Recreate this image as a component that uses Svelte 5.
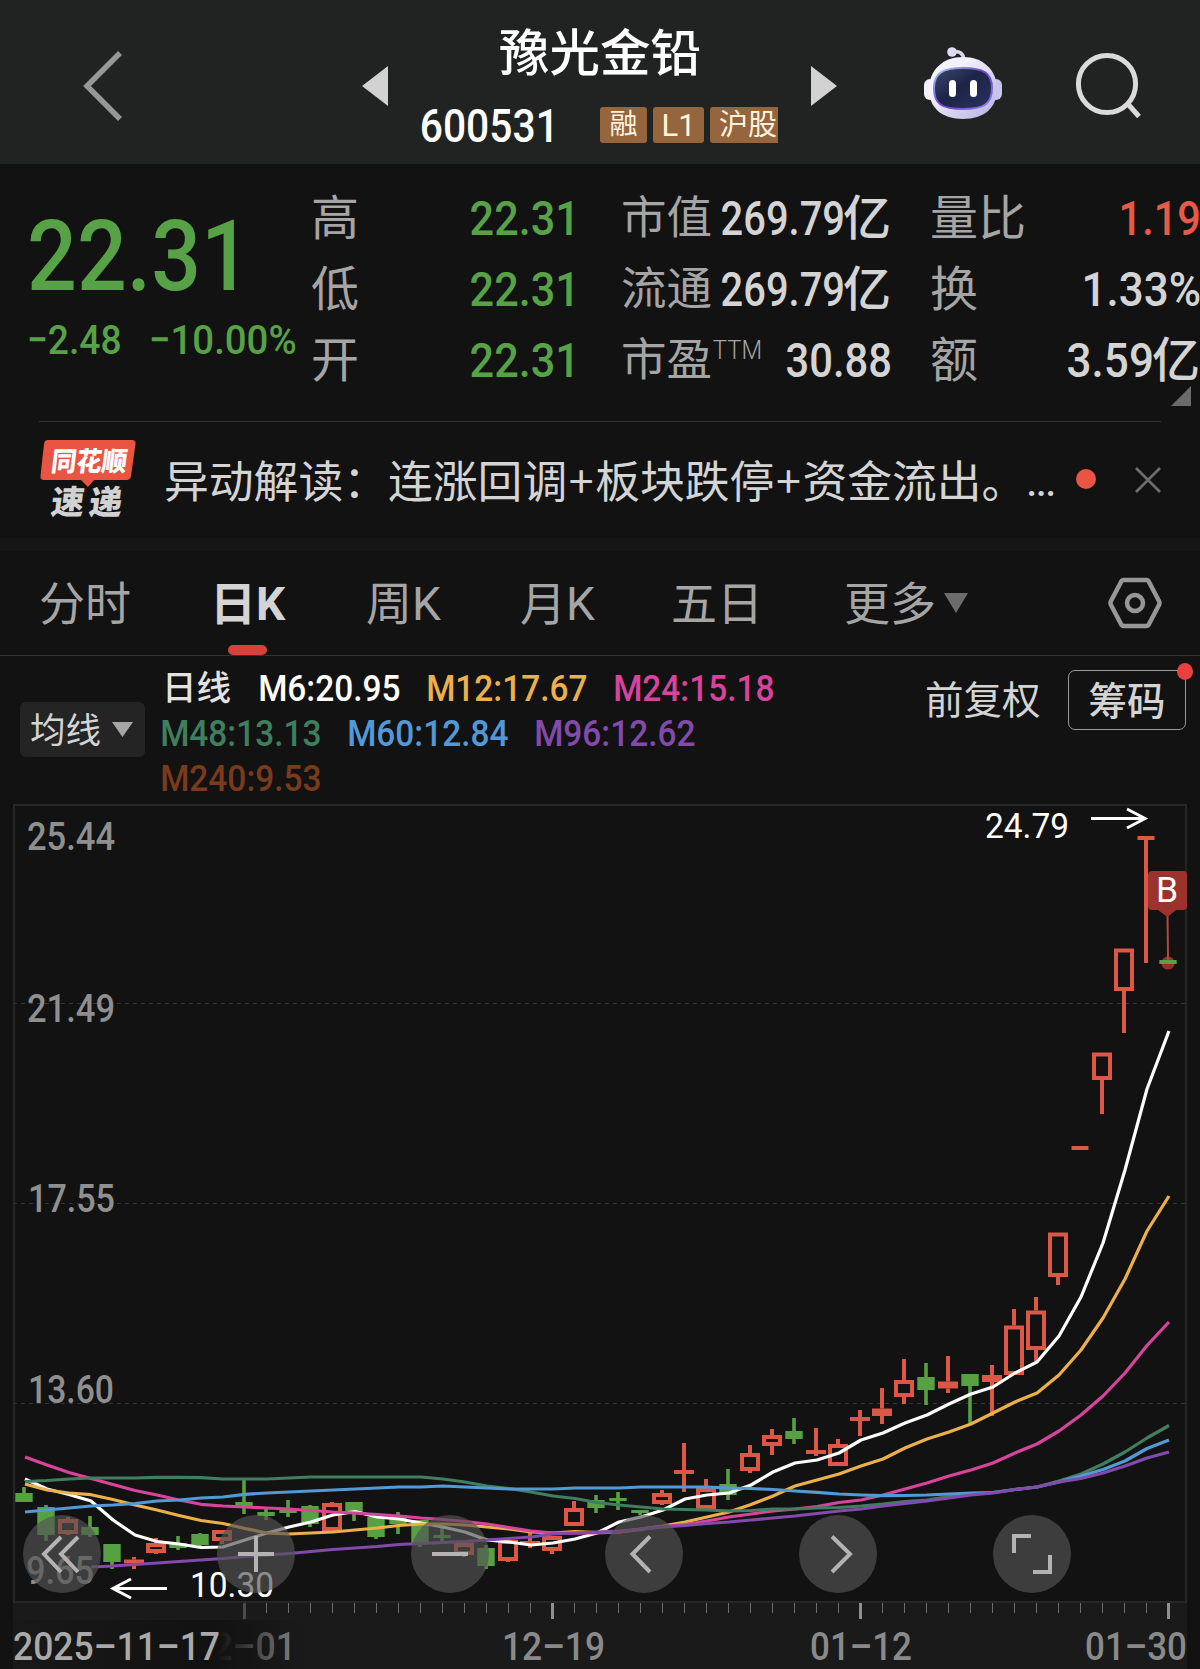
<script>
  const quotes = [
    [
      { label: '高', value: '22.31', w: 106, tone: 'down' },
      { label: '低', value: '22.31', w: 106, tone: 'down' },
      { label: '开', value: '22.31', w: 106, tone: 'down' }
    ],
    [
      { label: '市值', value: '269.79', w: 120, unit: '亿' },
      { label: '流通', value: '269.79', w: 120, unit: '亿' },
      { label: '市盈', sup: 'TTM', value: '30.88', w: 102 }
    ],
    [
      { label: '量比', value: '1.19', w: 78, tone: 'up' },
      { label: '换', value: '1.33%', w: 115 },
      { label: '额', value: '3.59', w: 83, unit: '亿' }
    ]
  ];

  const averages = [
    [
      { text: 'M6:20.95', w: 139, color: '#ffffff' },
      { text: 'M12:17.67', w: 158, color: '#ebb04c' },
      { text: 'M24:15.18', w: 158, color: '#d8449c' }
    ],
    [
      { text: 'M48:13.13', w: 158, color: '#3f7f5e' },
      { text: 'M60:12.84', w: 158, color: '#5299d6' },
      { text: 'M96:12.62', w: 158, color: '#824bab' }
    ],
    [{ text: 'M240:9.53', w: 158, color: '#7a3a1c' }]
  ];

  const STEP = 22;
  const cx = (i) => 24 + i * STEP;

  // [direction, high, body top, body bottom, low] in chart units
  const candles = [
    ['g', 1487, 1493, 1502, 1502], ['g', 1505, 1507, 1535, 1541], ['r', 1517, 1519, 1534, 1535],
    ['g', 1516, 1527, 1535, 1537], ['g', 1544, 1544, 1562, 1569], ['r', 1557, 1559.5, 1563.5, 1569],
    ['r', 1538, 1543, 1553, 1554], ['g', 1536, 1543, 1548, 1550], ['g', 1533, 1534, 1545, 1546],
    ['r', 1530, 1530, 1541, 1544], ['g', 1480, 1502, 1508, 1514], ['g', 1509, 1512, 1516, 1520],
    ['g', 1500, 1510, 1513, 1517], ['g', 1505, 1506, 1524, 1527], ['r', 1502, 1503, 1531, 1531],
    ['g', 1502, 1502, 1513, 1521], ['g', 1517, 1517, 1537, 1539], ['g', 1512, 1515, 1524, 1534],
    ['g', 1520, 1520, 1544, 1547], ['g', 1528, 1535, 1538, 1541], ['r', 1543, 1543, 1555, 1557],
    ['g', 1545, 1548, 1566, 1569], ['r', 1540, 1540, 1561, 1562], ['r', 1533, 1541, 1544, 1548],
    ['r', 1536, 1536, 1551, 1554], ['r', 1501, 1508, 1526, 1526], ['g', 1495, 1500, 1508, 1513],
    ['g', 1492, 1498, 1501, 1510], ['g', 1510, 1510, 1513, 1515], ['r', 1490, 1493, 1504, 1505],
    ['r', 1443, 1470, 1474, 1492], ['r', 1479, 1488, 1509, 1509], ['g', 1469, 1484, 1495, 1500],
    ['r', 1445, 1453, 1471, 1473], ['r', 1429, 1435, 1446, 1455], ['g', 1418, 1431, 1439, 1444],
    ['r', 1428, 1450, 1454, 1456], ['r', 1439, 1444, 1466, 1466], ['r', 1410, 1417, 1421, 1436],
    ['r', 1388, 1408.5, 1416, 1424], ['r', 1359, 1380, 1397, 1404], ['g', 1363, 1377, 1390, 1405],
    ['r', 1356, 1381.5, 1388.5, 1393], ['g', 1374, 1374, 1386, 1423], ['r', 1365, 1375, 1382, 1416],
    ['r', 1309, 1325.5, 1375, 1375], ['r', 1297, 1310.5, 1350, 1361], ['r', 1232.5, 1232.5, 1277, 1285],
    ['r', 1146, 1146, 1150, 1150, 17], ['r', 1052.5, 1052.5, 1080, 1114], ['r', 948.5, 948.5, 991, 1033],
    ['r', 836, 836, 840, 963, 17], ['g', 960, 960, 964, 964]
  ];

  const lines = [
    { color: '#ffffff', from: 0, ys: [1479, 1489, 1494.5, 1501, 1520, 1535, 1541.5, 1544, 1547.5, 1547, 1540, 1533, 1527, 1522, 1515, 1511.5, 1517, 1519, 1523, 1527, 1532, 1540, 1542, 1545, 1543, 1539, 1533, 1522, 1517, 1510, 1499, 1495, 1493, 1485, 1472, 1463, 1460, 1453, 1440, 1433, 1423, 1415, 1404, 1394, 1387, 1373, 1362, 1336, 1297, 1243, 1170, 1089, 1031] },
    { color: '#ebb04c', from: 0, ys: [1484, 1490, 1493, 1494.7, 1499.5, 1505, 1510, 1515.5, 1520.5, 1523.5, 1528.5, 1533, 1534, 1533, 1532, 1530, 1528, 1525.5, 1524, 1524, 1525, 1527, 1529, 1532, 1533, 1531.5, 1532.5, 1532, 1529, 1526, 1522, 1517, 1512, 1504.5, 1496, 1486, 1480, 1474, 1466, 1459, 1448, 1439, 1432, 1424, 1413, 1402, 1393, 1375, 1350, 1318, 1279, 1231, 1196] },
    { color: '#d8449c', from: 0, ys: [1457, 1465, 1472.5, 1478.5, 1484.5, 1490.5, 1495, 1500, 1504.3, 1506, 1507, 1508, 1509, 1510.5, 1512, 1513, 1514.5, 1516, 1518, 1519.5, 1521.5, 1524, 1527.5, 1531, 1533, 1533, 1533, 1532, 1529.5, 1526.5, 1524.5, 1521, 1517, 1514, 1511, 1509, 1506.5, 1502.5, 1500, 1495, 1489, 1483, 1476, 1470, 1463, 1453, 1444, 1431, 1415, 1396, 1373, 1345.5, 1322] },
    { color: '#417d5f', from: 0, ys: [1481.5, 1480.5, 1479, 1478, 1478, 1478, 1477.3, 1477.3, 1477.7, 1479, 1479, 1479, 1478, 1477, 1477, 1477, 1477, 1477, 1477, 1479, 1482, 1486, 1488.5, 1492, 1496, 1498.5, 1502.5, 1505, 1507, 1509, 1509.5, 1510, 1511, 1510.5, 1509, 1509, 1508, 1507.5, 1506, 1504, 1501.5, 1500, 1496.5, 1494, 1492.5, 1489.5, 1487, 1481, 1474, 1464, 1452, 1438, 1425.5] },
    { color: '#5299d6', from: 0, ys: [1512, 1510, 1508, 1506, 1505, 1503.5, 1501, 1500, 1498, 1497, 1494.3, 1493, 1492, 1491, 1490, 1489, 1488, 1487, 1487, 1486, 1487, 1488, 1489, 1489, 1489, 1488, 1488, 1488, 1487, 1487, 1487, 1487, 1488, 1488.5, 1489.5, 1491, 1492.3, 1494, 1495, 1495.7, 1495.5, 1495, 1494, 1493, 1492.5, 1489.5, 1487, 1482, 1476, 1469.5, 1461, 1448.5, 1440] },
    { color: '#824bab', from: 3, ys: [1567, 1566, 1564.5, 1563, 1561.5, 1560, 1558.5, 1556.5, 1555, 1553.5, 1551.5, 1549.5, 1548, 1546.5, 1544.5, 1543.5, 1542.5, 1541.5, 1540, 1538.5, 1537, 1534, 1533, 1532, 1531, 1529, 1527, 1525.5, 1523.5, 1522, 1520, 1518, 1516, 1513.5, 1511, 1509, 1506, 1503.3, 1501, 1498, 1495, 1493, 1489.5, 1487, 1482, 1478.5, 1473, 1466, 1458, 1452] }
  ].map((l) => ({
    color: l.color,
    points: l.ys.map((y, k) => `${cx(k + l.from) + 1},${y}`).join(' ')
  }));

  const grid = [1003.5, 1203.5, 1403.5];
  const prices = [
    ['25.44', 850, 29, 84], ['21.49', 1022, 29, 84], ['17.55', 1212, 30, 83], ['13.60', 1403, 30, 82], ['9.65', 1584, 28, 64]
  ];
  const ticks = Array.from({ length: 43 }, (_, k) => k + 10);
  const isMajor = (i) => (i - 10) % 14 === 0;
  const dates = [
    ['12–01', 194, 100], ['12–19', 504, 99], ['01–12', 812, 98], ['01–30', 1087, 98]
  ];
  const controls = ['first', 'plus', 'minus', 'prev', 'next', 'expand'];
</script>

{#snippet num(text, w, size, cls = '')}
  <svg class="num {cls}" width={w} height={size * 0.711}>
    <text x={-0.05 * size} y={size * 0.711} font-size={size} textLength={w + 0.09 * size} lengthAdjust="spacingAndGlyphs">{text}</text>
  </svg>
{/snippet}

<main>
  <header>
    <svg class="back" width="44" height="76" viewBox="0 0 44 76">
      <path d="M40 5 L7 38 L40 71" fill="none" stroke="#979797" stroke-width="5.5" />
    </svg>
    <svg class="prev" width="26" height="40"><path d="M0 20 L26 0 V40 Z" fill="#d2d2d2" /></svg>
    <div class="title">
      <h1>豫光金铅</h1>
      <div class="code">
        {@render num('600531', 135, 46, 'medium')}
        <div class="tags"><span>融</span><span class="l1">L1</span><span class="clip">沪股</span></div>
      </div>
    </div>
    <svg class="next" width="26" height="40"><path d="M26 20 L0 0 V40 Z" fill="#d2d2d2" /></svg>
    <svg class="robot" width="80" height="76" viewBox="0 0 80 76">
      <defs>
        <linearGradient id="shell" x1="0" y1="0" x2="1" y2="1">
          <stop offset="0.3" stop-color="#f4f2fb" /><stop offset="1" stop-color="#b4aedf" />
        </linearGradient>
        <linearGradient id="rim" x1="0" y1="0" x2="1" y2="1">
          <stop offset="0" stop-color="#9fd0ee" /><stop offset="0.5" stop-color="#6a3fc4" /><stop offset="1" stop-color="#8d84f0" />
        </linearGradient>
        <linearGradient id="visor" x1="0" y1="0" x2="1" y2="1">
          <stop offset="0" stop-color="#3d4870" /><stop offset="0.45" stop-color="#1d2448" /><stop offset="1" stop-color="#2b3160" />
        </linearGradient>
      </defs>
      <path d="M30 6 Q40 4 41 14" fill="none" stroke="#d9d7ee" stroke-width="3.6" />
      <circle cx="29" cy="6" r="4.8" fill="#dedcf2" />
      <rect x="1" y="33" width="14" height="21" rx="6" fill="#f2f1fb" />
      <rect x="65" y="33" width="14" height="21" rx="6" fill="#c9c5ea" />
      <path d="M40 11 C60 11 74 24 74 43 C74 62 61 73 40 73 C19 73 6 62 6 43 C6 24 20 11 40 11 Z" fill="url(#shell)" />
      <path d="M40 22 C60 22 69 27 69 42 C69 58 61 63 40 63 C19 63 11 58 11 42 C11 27 20 22 40 22 Z" fill="url(#visor)" stroke="url(#rim)" stroke-width="2" />
      <rect x="26" y="34" width="7" height="17" rx="3.5" fill="#fff" />
      <rect x="47" y="34" width="7" height="17" rx="3.5" fill="#fff" />
    </svg>
    <svg class="search" width="68" height="68" viewBox="0 0 68 68">
      <circle cx="32" cy="32" r="28.6" fill="none" stroke="#dadada" stroke-width="5" />
      <path d="M52 51 L64 64.500" stroke="#dadada" stroke-width="5" />
    </svg>
  </header>

  <section class="quote">
    <div class="last">
      {@render num('22.31', 215, 98.500, 'down medium')}
      <div class="change">
        {@render num('−2.48', 91, 41.500, 'down medium')}
        {@render num('−10.00%', 144, 41.500, 'down medium')}
      </div>
    </div>
    {#each quotes as group}
      <dl>
        {#each group as q}
          <div class="row">
            <dt>{q.label}{#if q.sup}{@render num(q.sup, 47, 25.500, 'sup')}{/if}</dt>
            <dd>{@render num(q.value, q.w, 49, (q.tone ?? '') + ' medium')}{#if q.unit}<span>{q.unit}</span>{/if}</dd>
          </div>
        {/each}
      </dl>
    {/each}
    <svg class="corner" width="20" height="20"><path d="M20 0 V20 H0 Z" fill="#6b6b6b" /></svg>
  </section>

  <section class="news">
    <svg class="logo" width="98" height="80" viewBox="0 0 98 80">
      <path d="M9 0 H93 Q97 0 96.500 4 L92 36 Q91.500 40 87 40 H55 L49 47 L42 40 H5 Q1 40 1.500 36 L5 4 Q5.500 0 9 0 Z" fill="#ea5442" />
      <g transform="skewX(-7)">
        <text x="15" y="31" font-size="27" textLength="76" lengthAdjust="spacingAndGlyphs" fill="#fff">同花顺</text>
        <text x="20" y="74" font-size="33" textLength="33" lengthAdjust="spacingAndGlyphs" fill="#d2d2d2">速</text>
        <text x="58" y="74" font-size="33" textLength="33" lengthAdjust="spacingAndGlyphs" fill="#d2d2d2">递</text>
      </g>
    </svg>
    <p>异动解读：连涨回调<i>+</i>板块跌停<i>+</i>资金流出。<b>...</b></p>
    <span class="dot"></span>
    <svg class="close" width="26" height="26"><path d="M1 1 L25 25 M25 1 L1 25" stroke="#6e6e6e" stroke-width="2.6" /></svg>
  </section>

  <nav>
    <span class="t1">分时</span>
    <span class="t2 active">日K</span>
    <span class="t3">周K</span>
    <span class="t4">月K</span>
    <span class="t5">五日</span>
    <span class="t6">更多</span>
    <svg class="caret" width="24" height="20"><path d="M0 0 H24 L12 20 Z" fill="#6c6c6c" /></svg>
    <svg class="gear" width="54" height="52" viewBox="0 0 54 52">
      <path d="M15.500 3 H38.500 Q40 3 41 5 L51 24 Q52 26 51 28 L41 47 Q40 49 38.500 49 H15.500 Q14 49 13 47 L3 28 Q2 26 3 24 L13 5 Q14 3 15.500 3 Z" fill="none" stroke="#979797" stroke-width="4.500" />
      <circle cx="27" cy="26" r="8" fill="none" stroke="#979797" stroke-width="4.500" />
    </svg>
  </nav>

  <section class="legend">
    <button class="ma">均线<svg width="21" height="15"><path d="M0 0 H21 L10.500 15 Z" fill="#a6a6a6" /></svg></button>
    <div class="lines">
      {#each averages as row, r}
        <div class="avg">
          {#if r === 0}<span class="day">日线</span>{/if}
          {#each row as a}
            <span style:color={a.color}>{@render num(a.text, a.w, 37.500, 'medium')}</span>
          {/each}
        </div>
      {/each}
    </div>
    <span class="adjust">前复权</span>
    <button class="chips">筹码<i></i></button>
  </section>

  <section class="chart">
    <svg width="1200" height="866" viewBox="0 803 1200 866">
      <defs>
        <linearGradient id="fade" x1="0" x2="1" y1="0" y2="0">
          <stop offset="0" stop-color="#121212" stop-opacity="0.2" />
          <stop offset="0.6" stop-color="#121212" />
          <stop offset="0.7" stop-color="#121212" />
          <stop offset="1" stop-color="#121212" stop-opacity="0" />
        </linearGradient>
      </defs>
      <rect x="13" y="1602" width="1174" height="67" fill="#1a1a1a" />
      <path d="M13 805 H1186 V1602 H14 V804" fill="none" stroke="#262626" stroke-width="2" />
      {#each grid as y}
        <path d="M13 {y} H1186" stroke="#353535" stroke-dasharray="4 4" />
      {/each}
      <g class="price">
        {#each prices as [text, y, x, w]}
          <text x={x - 2} {y} font-size="38" textLength={w + 4} lengthAdjust="spacingAndGlyphs">{text}</text>
        {/each}
      </g>

      <circle cx="1168" cy="963" r="6.600" fill="#93302a" />
      {#each candles as [dir, hi, top, bot, lo, width], i}
        {#if dir === 'g'}
          <path d="M{cx(i)} {hi} V{lo}" stroke="#57a143" stroke-width="3.600" />
          <rect x={cx(i) - 8.7} y={top} width="17.400" height={bot - top} fill="#57a143" />
        {:else}
          <path d="M{cx(i)} {hi} V{top} M{cx(i)} {bot} V{lo}" stroke="#dc5745" stroke-width="4" />
          {#if bot - top > 8}
            <rect x={cx(i) - 8} y={top + 2} width="16" height={bot - top - 4} fill="none" stroke="#dc5745" stroke-width="4" />
          {:else}
            <rect x={cx(i) - (width ?? 20) / 2} y={top} width={width ?? 20} height={bot - top} fill="#dc5745" />
          {/if}
        {/if}
      {/each}
      {#each lines as l}
        <polyline points={l.points} fill="none" stroke={l.color} stroke-width="3.200" stroke-linejoin="round" />
      {/each}

      <g class="mark">
        <text x="190" y="1597" font-size="35" textLength="84" lengthAdjust="spacingAndGlyphs">10.30</text>
        <text x="985" y="838" font-size="35" textLength="84" lengthAdjust="spacingAndGlyphs">24.79</text>
        <path d="M167 1588.500 H113 M131 1579 L113 1588.500 L131 1598" />
        <path d="M1091 818.500 H1145 M1127 809 L1145 818.500 L1127 828" />
      </g>
      <path d="M1167.500 915 L1168 960" stroke="#b14940" stroke-width="2" />
      <path d="M1152 871 H1183 Q1187 871 1187 875 V906 Q1187 910 1183 910 H1176 L1167.500 917 L1158 910 H1152 Q1148 910 1148 906 V875 Q1148 871 1152 871 Z" fill="#9c322c" />
      <text class="flag" x="1156" y="902" font-size="35.500">B</text>

      {#each ticks as i}
        {#if isMajor(i)}
          <rect x={cx(i) - 1} y="1603" width="3" height="16" fill={i === 10 ? '#4c4c4c' : '#8f8f8f'} />
        {:else}
          <rect x={cx(i)} y="1603" width="1" height="10" fill="#6a6a6a" />
        {/if}
      {/each}
      <g class="date">
        {#each dates as [text, x, w]}
          <text x={x - 2} y="1660" font-size="38.500" textLength={w + 4} lengthAdjust="spacingAndGlyphs">{text}</text>
        {/each}
        <rect x="13" y="1620" width="292" height="49" fill="url(#fade)" />
        <text class="start" x="13" y="1660" font-size="38.500" textLength="207" lengthAdjust="spacingAndGlyphs">2025–11–17</text>
      </g>
    </svg>

    <div class="controls">
      {#each controls as c}
        <button aria-label={c}>
          <svg width="78" height="78" viewBox="0 0 78 78">
            {#if c === 'first'}<path d="M38 22 L21 39 L38 57 M55 22 L38 39 L55 57" />
            {:else if c === 'plus'}<path d="M21 39 H57 M39 21 V57" />
            {:else if c === 'minus'}<path d="M21 39 H57" />
            {:else if c === 'prev'}<path d="M45 21.500 L27.500 39 L45 57" />
            {:else if c === 'next'}<path d="M33 21.500 L51 39 L33 57" />
            {:else}<path d="M38 21 H21 V38 M40 57 H57 V40" />{/if}
          </svg>
        </button>
      {/each}
    </div>
  </section>
</main>

<style>
  :global(body) { margin: 0; background: #121212; }
  main {
    width: 1200px;
    height: 1669px;
    overflow: hidden;
    background: #121212;
    color: #d4d4d4;
    font-family: Roboto, 'Noto Sans CJK SC', sans-serif;
  }
  svg { display: block; flex: none; }
  button { font: inherit; color: inherit; padding: 0; border: 0; box-sizing: border-box; }
  .num { overflow: visible; }
  .num text { fill: currentColor; }
  .medium { font-weight: 500; }
  .down { color: #57a146; }
  .up { color: #e65a46; }

  header {
    display: flex;
    box-sizing: border-box;
    height: 164px;
    padding-left: 80px;
    background: #202322;
  }
  .back { margin-top: 48px; }
  .prev { margin: 66px 0 0 238px; }
  .title { width: 356px; margin: 0 33px 0 34px; }
  h1 {
    margin: 24px 0 0 77px;
    font-size: 50.5px;
    line-height: 60px;
    font-weight: 500;
    color: #fff;
  }
  .code {
    display: flex;
    align-items: center;
    justify-content: space-between;
    height: 36px;
    margin-top: 23px;
    color: #fff;
  }
  .tags { display: flex; gap: 6px; width: 178px; overflow: hidden; }
  .tags span {
    flex: none;
    width: 47px;
    height: 36px;
    border-radius: 3px;
    background: #95653d;
    color: #fff3df;
    font-size: 28px;
    line-height: 36px;
    text-align: center;
  }
  .tags .l1 { width: 51px; font-size: 31px; line-height: 37px; }
  .tags .clip { width: 80px; box-sizing: border-box; padding-left: 9px; text-align: left; font-size: 29px; }
  .next { margin-top: 66px; }
  .robot { margin: 46px 0 0 86px; }
  .search { margin: 52px 0 0 72px; }

  .quote {
    position: relative;
    display: flex;
    height: 257px;
  }
  .last { width: 279px; padding: 56px 0 0 32px; flex: none; }
  .change { display: flex; gap: 31px; margin: 34px 0 0 -3px; }
  dl { margin: 18px 0 0; width: 267px; flex: none; }
  dl + dl { margin-left: 43px; width: 269px; }
  dl + dl + dl { margin-left: 40px; width: 269px; }
  .row { display: flex; justify-content: space-between; align-items: center; height: 71px; }
  dt {
    display: flex;
    margin-top: -6px;
    font-family: 'Noto Sans CJK SC', sans-serif;
    font-size: 48px;
    line-height: 71px;
    color: #a5a5a5;
  }
  dl:nth-of-type(2) dt { font-size: 45.5px; }
  dt :global(.sup) { margin: 20px 0 0 2px; font-weight: 300; font-family: Roboto; }
  dd { display: flex; align-items: center; margin: 0; }
  dd span { margin: -6px -1px 0 0; font: 500 48px/71px 'Noto Sans CJK SC', sans-serif; }
  .corner { position: absolute; right: 9px; bottom: 15px; }

  .news {
    display: flex;
    box-sizing: border-box;
    height: 117px;
    margin: 0 39px;
    border-top: 1px solid #333;
  }
  .logo { margin-top: 18px; font-family: 'Noto Sans CJK SC', sans-serif; font-weight: 900; }
  .news p {
    display: flex;
    width: 912px;
    margin: 24px 0 0 27px;
    font-size: 44.8px;
    line-height: 66px;
    white-space: nowrap;
    font-family: 'Noto Sans CJK SC', sans-serif;
  }
  .news i { width: 28px; text-align: center; font-style: normal; }
  .news b { margin-left: 0; padding-top: 4px; font-family: Roboto; font-weight: 500; font-size: 38px; letter-spacing: -1px; }
  .dot { width: 20px; height: 20px; margin-top: 47px; border-radius: 50%; background: #ea5442; }
  .close { margin: 45px 0 0 39px; }

  nav {
    display: flex;
    box-sizing: border-box;
    height: 118px;
    border-top: 13px solid #161616;
    border-bottom: 1px solid #333;
    font-size: 46px;
    line-height: 106px;
    color: #a5a5a5;
  }
  nav span { white-space: nowrap; flex: none; height: 104px; }
  .t1 { width: 171px; margin-left: 39px; }
  .t2 { width: 156px; }
  .t3 { width: 154px; }
  .t4 { width: 151px; }
  .t5 { width: 173px; }
  .t6 { width: 100px; }
  .active { position: relative; color: #d4d4d4; font-weight: 700; }
  .active::after {
    content: '';
    position: absolute;
    left: 18px;
    bottom: 0;
    width: 39px;
    height: 10px;
    border-radius: 5px;
    background: #d3433c;
  }
  .caret { margin-top: 42px; }
  .gear { margin: 26px 0 0 140px; }

  .legend { display: flex; height: 147px; }
  .ma {
    display: flex;
    align-items: center;
    gap: 11px;
    width: 125px;
    height: 55px;
    margin: 46px 0 0 20px;
    padding: 2px 0 0 10px;
    border-radius: 6px;
    background: #242424;
    font-size: 35.5px;
    line-height: 50px;
    color: #d4d4d4;
  }
  .ma svg { margin-top: -2px; }
  .lines { width: 729px; padding: 9px 0 0 17px; }
  .avg { display: flex; align-items: center; gap: 29px; height: 45px; }
  .day { width: 69px; font-size: 34.5px; line-height: 45px; font-weight: 500; margin: 1px 0 0; color: #e2e2e2; }
  .adjust { width: 116px; margin: 19px 0 0 34px; font-size: 38.5px; line-height: 52px; white-space: nowrap; }
  .chips {
    position: relative;
    width: 118px;
    height: 60px;
    margin: 14px 0 0 27px;
    border: 1.5px solid #9a9a9a;
    border-radius: 7px;
    background: none;
    font-size: 38.5px;
    line-height: 54px;
    padding-top: 3px;
    font-weight: 500;
  }
  .chips i {
    position: absolute;
    top: -8px;
    right: -8px;
    width: 16px;
    height: 17px;
    border-radius: 50%;
    background: #ea4040;
  }

  .chart { position: relative; }
  .price { fill: #8f8f8f; font-weight: 500; }
  .mark text { fill: #fff; }
  .mark path { fill: none; stroke: #fff; stroke-width: 3; }
  .flag { fill: #fff; }
  .date { fill: #8a8a8a; font-weight: 500; }
  .start { fill: #a9a9a9; }
  .controls {
    position: absolute;
    left: 23px;
    top: 712px;
    display: flex;
    gap: 116px;
  }
  .controls button { width: 78px; height: 78px; border-radius: 50%; background: rgba(84, 84, 84, 0.67); }
  .controls path { fill: none; stroke: #b4b2b2; stroke-width: 4; }
</style>
